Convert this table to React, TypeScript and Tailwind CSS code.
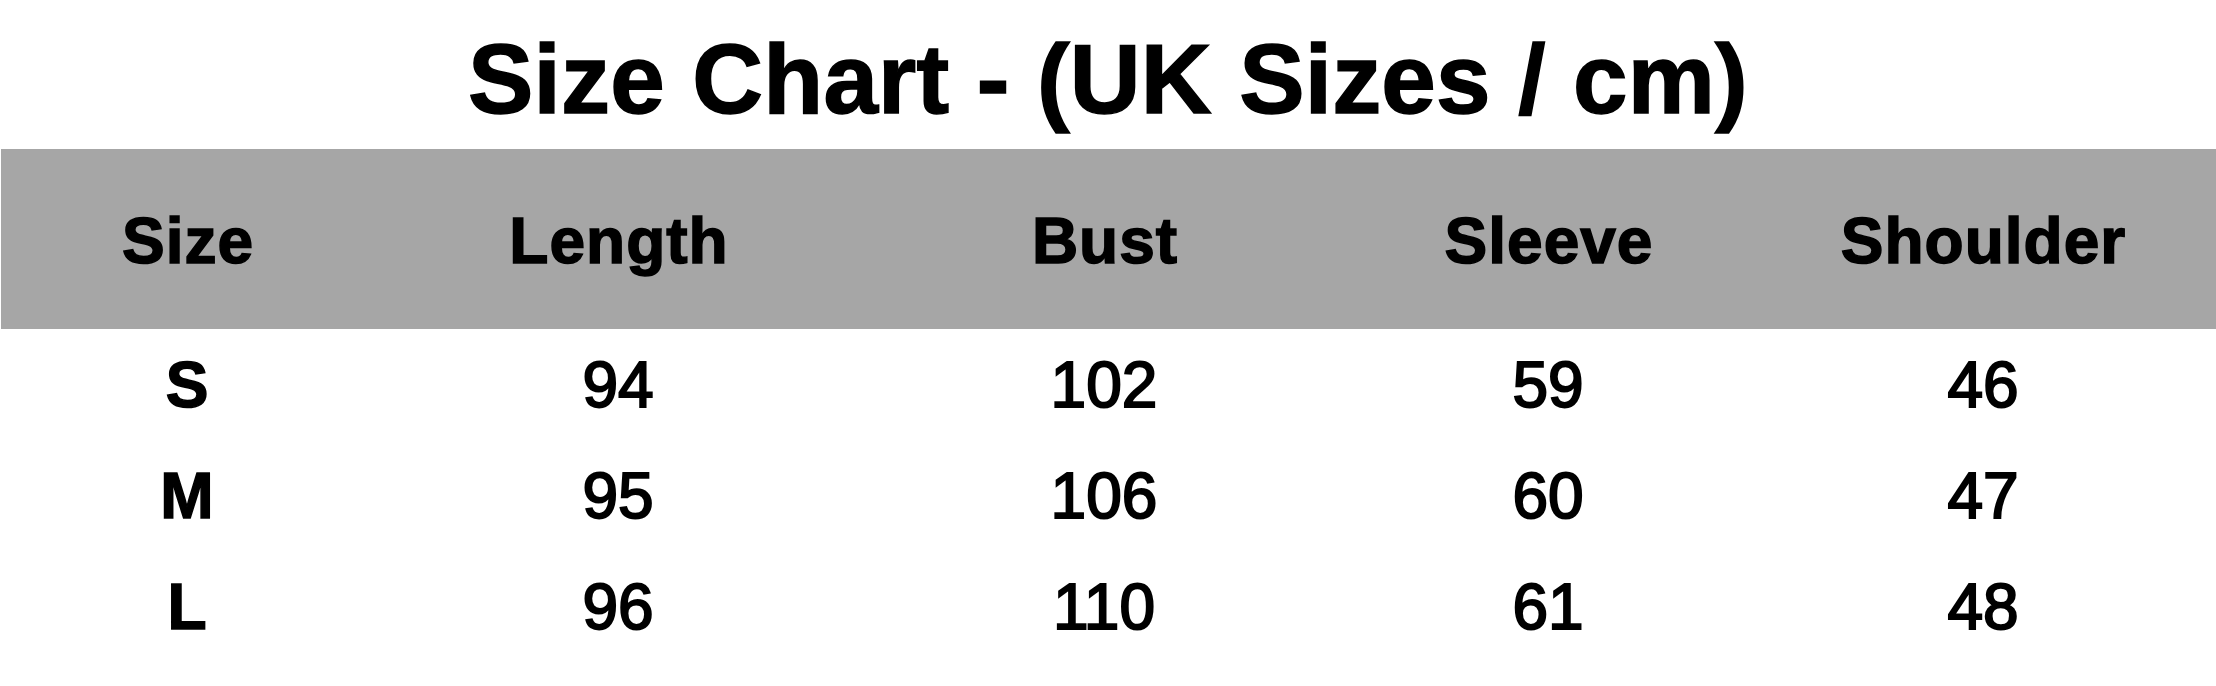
import React from "react";

const cols = "grid grid-cols-[374px_488px_484px_404px_1fr]";
const headers = ["Size", "Length", "Bust", "Sleeve", "Shoulder"];
const rows = [
  ["S", "94", "102", "59", "46"],
  ["M", "95", "106", "60", "47"],
  ["L", "96", "110", "61", "48"],
];

export default function App() {
  return (
    <div className="w-[2216px] h-[686px] bg-white text-black font-['Liberation_Sans',Arial,sans-serif] overflow-hidden">
      <div className="pt-[30px] h-[128px] text-center text-[98px] leading-[98px] font-bold tracking-[0.2px] [-webkit-text-stroke:1.5px_black]">
        Size Chart - (UK Sizes / cm)
      </div>
      <div className="mt-[21px] ml-px h-[180px] bg-[#a6a6a6] pt-[4px]">
        <div className={`${cols} h-full items-center`}>
          {headers.map((h) => (
            <div key={h} className="text-center text-[64px] leading-[64px] font-bold tracking-[1px] [-webkit-text-stroke:1.5px_black]">
              {h}
            </div>
          ))}
        </div>
      </div>
      <div className="flex flex-col">
        {rows.map((r) => (
          <div key={r[0]} className={`${cols} h-[111px] items-center`}>
            {r.map((c, i) => (
              <div
                key={i}
                className={
                  i === 0
                    ? "text-center text-[64px] leading-[64px] font-bold [-webkit-text-stroke:1.5px_black]"
                    : "text-center text-[64px] leading-[64px] font-normal [-webkit-text-stroke:2px_black]"
                }
              >
                {c}
              </div>
            ))}
          </div>
        ))}
      </div>
    </div>
  );
}
